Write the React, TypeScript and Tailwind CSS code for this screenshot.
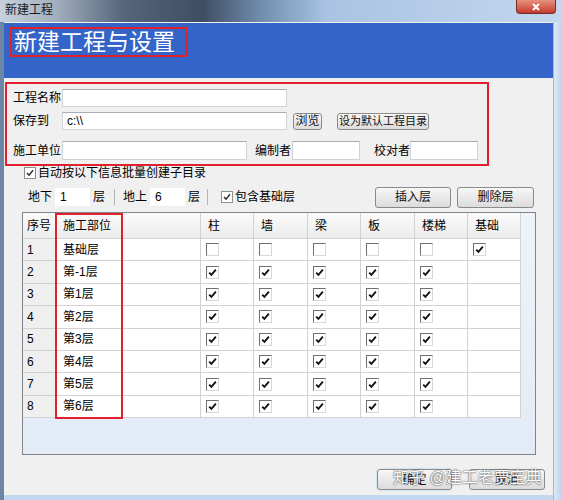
import React from 'react';

const FONT = "font-['Liberation_Sans','Noto_Sans_CJK_SC',sans-serif]";

const Check = ({ on }: { on: boolean }) => (
  <span className="flex h-[13px] w-[13px] shrink-0 items-center justify-center border border-t-[#6f6f6f] border-l-[#6f6f6f] border-r-[#d8d8d8] border-b-[#d8d8d8] bg-white">
    {on && (
      <svg width="9" height="9" viewBox="0 0 9 9">
        <path d="M1.2 4.6 L3.4 6.9 L7.9 1.6" fill="none" stroke="#111" strokeWidth="1.8" />
      </svg>
    )}
  </span>
);

const SmallCheck = () => (
  <span className="flex h-[12px] w-[12px] shrink-0 items-center justify-center border border-[#8e8f8f] bg-white">
    <svg width="8" height="8" viewBox="0 0 8 8">
      <path d="M1 4 L3 6.2 L7 1.3" fill="none" stroke="#2a2a2a" strokeWidth="1.4" />
    </svg>
  </span>
);

const Btn = ({ children, className }: { children: React.ReactNode; className: string }) => (
  <div
    className={
      'flex items-center justify-center whitespace-nowrap rounded-[3px] border border-[#8a8a8a] bg-gradient-to-b from-[#f7f7f7] to-[#dcdcdc] text-[#111] ' +
      className
    }
  >
    {children}
  </div>
);

const cols = ['柱', '墙', '梁', '板', '楼梯', '基础'];

const rows = [
  { n: 1, name: '基础层', first: true },
  { n: 2, name: '第-1层', first: false },
  { n: 3, name: '第1层', first: false },
  { n: 4, name: '第2层', first: false },
  { n: 5, name: '第3层', first: false },
  { n: 6, name: '第4层', first: false },
  { n: 7, name: '第5层', first: false },
  { n: 8, name: '第6层', first: false },
];

const GRID = 'grid grid-cols-[33px_145px_53px_54px_53px_54px_53px_53px]';

export default function App() {
  return (
    <div className={`relative flex h-[500px] w-[562px] flex-col overflow-hidden bg-[#c3d7ef] text-[12px] text-black ${FONT}`}>
      {/* title bar */}
      <div className="relative h-[22px] shrink-0 bg-[linear-gradient(90deg,#c7d1dc_0%,#a2afbe_10%,#55657a_22%,#3f4e62_36%,#6f8aab_46%,#a9c3e2_58%,#c3d8ef_100%)]">
        <span className="absolute left-[5px] top-[3px] text-[12px] leading-[14px] text-[#1b1b1b]">新建工程</span>
        <div className="absolute left-[516px] top-0 flex h-[14px] w-[40px] items-center justify-center rounded-b-[4px] border border-t-0 border-[#7a2a22] bg-gradient-to-b from-[#e9907f] to-[#c23a2c]">
          <svg width="10" height="8" viewBox="0 0 10 8">
            <path d="M2 1 L8 7 M8 1 L2 7" stroke="#fff" strokeWidth="2" />
          </svg>
        </div>
      </div>

      <div className="flex flex-1">
        <div className="w-[4px] bg-[#6e86a6]" />
        <div className="flex h-[473px] w-[549px] flex-col bg-[#f0f0f0]">
          {/* banner */}
          <div className="mt-[1px] h-[55px] bg-[#3464c8] pl-[6px] pt-[4px]">
            <div className="h-[30px] w-[178px] border-2 border-[#e0202a] pl-[2px] text-[23px] leading-[26px] text-white">
              新建工程与设置
            </div>
          </div>

          {/* project form */}
          <div className="ml-[1px] mt-[4px] h-[84px] w-[484px] border-2 border-[#e0202a] pl-[6px] pt-[5px]">
            <div className="flex h-[18px] items-center">
              <span className="w-[49px]">工程名称</span>
              <div className="h-[18px] w-[225px] border border-[#cfd3d8] border-t-[#a9adb3] bg-white" />
            </div>
            <div className="mt-[5px] flex h-[18px] items-center">
              <span className="w-[49px]">保存到</span>
              <div className="h-[18px] w-[225px] border border-[#cfd3d8] border-t-[#a9adb3] bg-white pl-[4px] leading-[16px]">c:\\</div>
              <Btn className="ml-[6px] h-[17px] w-[29px]">浏览</Btn>
              <Btn className="ml-[15px] h-[17px] w-[92px] text-[11px]">设为默认工程目录</Btn>
            </div>
            <div className="mt-[11px] flex h-[19px] items-center whitespace-nowrap">
              <span className="w-[49px]">施工单位</span>
              <div className="h-[19px] w-[185px] border border-[#cfd3d8] border-t-[#a9adb3] bg-white" />
              <span className="ml-[8px] w-[37px]">编制者</span>
              <div className="h-[19px] w-[68px] border border-[#cfd3d8] border-t-[#a9adb3] bg-white" />
              <span className="ml-[14px] w-[36px]">校对者</span>
              <div className="h-[19px] w-[68px] border border-[#cfd3d8] border-t-[#a9adb3] bg-white" />
            </div>
          </div>

          {/* auto create */}
          <div className="flex h-[14px] items-center pl-[20px]">
            <SmallCheck />
            <span className="ml-[2px]">自动按以下信息批量创建子目录</span>
          </div>

          {/* floors */}
          <div className="mt-[5px] flex h-[24px] items-center pl-[24px]">
            <span>地下</span>
            <div className="ml-[3px] h-[18px] w-[35px] bg-white pl-[5px] leading-[18px]">1</div>
            <span className="ml-[3px]">层</span>
            <div className="ml-[9px] h-[16px] w-px bg-[#b4b4b4]" />
            <span className="ml-[8px]">地上</span>
            <div className="ml-[3px] h-[18px] w-[35px] bg-white pl-[5px] leading-[18px]">6</div>
            <span className="ml-[3px]">层</span>
            <div className="ml-[7px] h-[16px] w-px bg-[#b4b4b4]" />
            <span className="ml-[13px]"><SmallCheck /></span>
            <span className="ml-[2px]">包含基础层</span>
            <Btn className="ml-[80px] h-[21px] w-[76px]">插入层</Btn>
            <Btn className="ml-[6px] h-[21px] w-[77px]">删除层</Btn>
          </div>

          {/* table */}
          <div className="relative ml-[18px] mt-[3px] h-[243px] w-[514px] border border-[#7f858e] bg-gradient-to-b from-[#eef3fa] to-[#e2ebf6]">
            <div className={`${GRID} h-[26px] w-[498px]`}>
              <div className="flex items-center border-b border-r border-[#d2d2d2] bg-gradient-to-b from-[#fbfbfb] to-[#ececec] pl-[4px]">序号</div>
              <div className="flex items-center border-b border-r border-[#d2d2d2] bg-gradient-to-b from-[#fbfbfb] to-[#ececec] pl-[7px]">施工部位</div>
              {cols.map((c) => (
                <div key={c} className="flex items-center border-b border-r border-[#d2d2d2] bg-gradient-to-b from-[#fbfbfb] to-[#ececec] pl-[7px]">
                  {c}
                </div>
              ))}
            </div>
            {rows.map((r) => (
              <div key={r.n} className={`${GRID} h-[22.4px] w-[498px]`}>
                <div className="flex items-center border-b border-r border-[#d2d2d2] bg-[#efefef] pl-[4px]">{r.n}</div>
                <div className="flex items-center border-b border-r border-[#d2d2d2] bg-white pl-[7px]">{r.name}</div>
                {cols.map((c, i) => (
                  <div key={c} className="flex items-center border-b border-r border-[#d2d2d2] bg-white pl-[5px]">
                    {i < 5 ? <Check on={!r.first} /> : r.first ? <Check on /> : null}
                  </div>
                ))}
              </div>
            ))}
            <div className="absolute left-[32px] top-[0px] h-[206px] w-[68px] border-[2px] border-[#e0202a]" />
          </div>

          {/* bottom buttons */}
          <div className="mt-[14px] flex">
            <Btn className="ml-[373px] h-[21px] w-[75px] border-[#3c7fb1] from-[#eaf6fd] to-[#bee6fd] shadow-[0_0_2px_#8fd0f5]">确定</Btn>
            <Btn className="ml-[17px] h-[21px] w-[76px]">取消</Btn>
          </div>
        </div>
        <div className="flex-1 border-l border-[#9fb9d8] bg-gradient-to-r from-[#dfeaf7] to-[#bcd2ec]" />
      </div>

      {/* watermark */}
      <div className="absolute left-[393px] top-[468px] text-[16px] leading-[20px] text-white opacity-90 [text-shadow:0_0_2px_#444,0_0_1px_#444]">
        知乎 @建工老贾宝典
      </div>
    </div>
  );
}
